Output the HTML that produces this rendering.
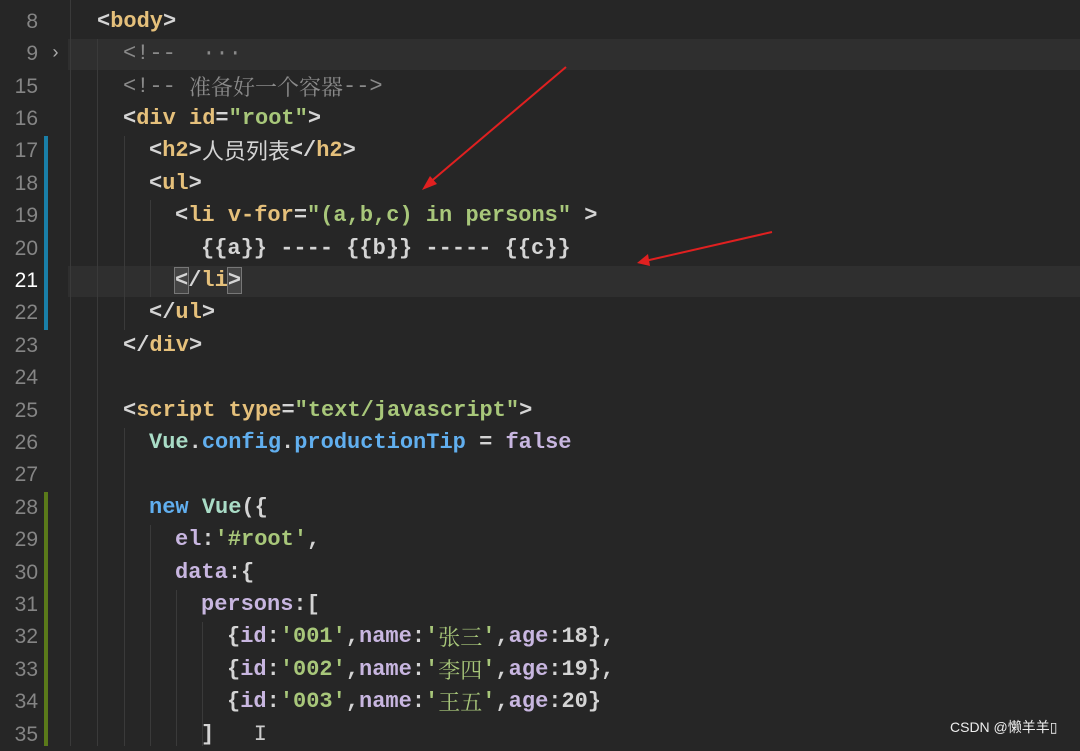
<!DOCTYPE html>
<html><head><meta charset="utf-8"><style>
body{margin:0;width:1080px;height:746px;background:#262626;overflow:hidden;position:relative;font-family:"Liberation Mono","Noto Sans CJK SC",monospace;font-size:22px;font-weight:bold;}
.ln{position:absolute;left:0;width:38px;text-align:right;color:#858585;font-weight:normal;font-family:"Liberation Sans",sans-serif;font-size:21px;height:32.4px;line-height:32.4px}
.c{position:absolute;white-space:pre;height:32.4px;line-height:32.4px;color:#d4d4d4}
.hl{position:absolute;left:68px;right:0;height:31px;background:#2f2f2f}
.t{color:#e5c07b}.s{color:#a8c77a}.g{color:#8a8a8a;font-weight:normal}.v{color:#a9dcc6}.b{color:#61afef}.p{color:#c8b6e0}
.cj{font-weight:normal;font-family:"Noto Sans CJK SC",sans-serif;line-height:1;display:inline-block;transform:translateY(3px)}
.cs{font-weight:normal;font-family:"Noto Serif CJK SC",serif;line-height:1;display:inline-block;transform:translateY(3px)}
.guide{position:absolute;width:1px;background:#3a3a3a}
</style></head><body>
<div class="hl" style="top:39px"></div>
<div class="hl" style="top:266px"></div>
<div style="position:absolute;left:44px;top:136px;width:4px;height:194px;background:#1a7fa8"></div>
<div style="position:absolute;left:44px;top:492px;width:4px;height:254px;background:#5a7a1a"></div>
<div class="guide" style="left:70px;top:0;height:746px"></div>
<div class="guide" style="left:97px;top:39px;height:707px"></div>
<div class="guide" style="left:124px;top:136px;height:194px"></div>
<div class="guide" style="left:124px;top:428px;height:318px"></div>
<div class="guide" style="left:150px;top:200px;height:97px"></div>
<div class="guide" style="left:150px;top:525px;height:221px"></div>
<div class="guide" style="left:176px;top:590px;height:156px"></div>
<div class="guide" style="left:202px;top:622px;height:124px"></div>
<div class="ln" style="top:5.8px">8</div><div class="c" style="left:97px;top:5.8px">&lt;<span class="t">body</span>&gt;</div>
<div class="ln" style="top:38.2px">9</div><div style="position:absolute;left:50px;top:38px;color:#aaa;font-size:18px;font-weight:normal;line-height:32px">›</div><div class="c g" style="left:123px;top:38.2px">&lt;!--  ···</div>
<div class="ln" style="top:70.6px">15</div><div class="c g" style="left:123px;top:70.6px">&lt;!-- <span class="cs">准备好一个容器</span>--&gt;</div>
<div class="ln" style="top:103px">16</div><div class="c" style="left:123px;top:103px">&lt;<span class="t">div</span> <span class="t">id</span>=<span class="s">"root"</span>&gt;</div>
<div class="ln" style="top:135.4px">17</div><div class="c" style="left:149px;top:135.4px">&lt;<span class="t">h2</span>&gt;<span class="cj">人员列表</span>&lt;/<span class="t">h2</span>&gt;</div>
<div class="ln" style="top:167.8px">18</div><div class="c" style="left:149px;top:167.8px">&lt;<span class="t">ul</span>&gt;</div>
<div class="ln" style="top:200.2px">19</div><div class="c" style="left:175px;top:200.2px">&lt;<span class="t">li</span> <span class="t">v-for</span>=<span class="s">"(a,b,c) in persons"</span> &gt;</div>
<div class="ln" style="top:232.6px">20</div><div class="c" style="left:201px;top:232.6px">{{a}} ---- {{b}} ----- {{c}}</div>
<div class="ln" style="top:265px;color:#fff">21</div><div class="c" style="left:175px;top:265px"><span style="outline:1px solid #777;background:#444">&lt;</span>/<span class="t">li</span><span style="outline:1px solid #777;background:#444">&gt;</span></div>
<div class="ln" style="top:297.4px">22</div><div class="c" style="left:149px;top:297.4px">&lt;/<span class="t">ul</span>&gt;</div>
<div class="ln" style="top:329.8px">23</div><div class="c" style="left:123px;top:329.8px">&lt;/<span class="t">div</span>&gt;</div>
<div class="ln" style="top:362.2px">24</div>
<div class="ln" style="top:394.6px">25</div><div class="c" style="left:123px;top:394.6px">&lt;<span class="t">script</span> <span class="t">type</span>=<span class="s">"text/javascript"</span>&gt;</div>
<div class="ln" style="top:427px">26</div><div class="c" style="left:149px;top:427px"><span class="v">Vue</span>.<span class="b">config</span>.<span class="b">productionTip</span> = <span class="p">false</span></div>
<div class="ln" style="top:459.4px">27</div>
<div class="ln" style="top:491.8px">28</div><div class="c" style="left:149px;top:491.8px"><span class="b">new</span> <span class="v">Vue</span>({</div>
<div class="ln" style="top:524.2px">29</div><div class="c" style="left:175px;top:524.2px"><span class="p">el</span>:<span class="s">'#root'</span>,</div>
<div class="ln" style="top:556.6px">30</div><div class="c" style="left:175px;top:556.6px"><span class="p">data</span>:{</div>
<div class="ln" style="top:589px">31</div><div class="c" style="left:201px;top:589px"><span class="p">persons</span>:[</div>
<div class="ln" style="top:621.4px">32</div><div class="c" style="left:227px;top:621.4px">{<span class="p">id</span>:<span class="s">'001'</span>,<span class="p">name</span>:<span class="s">'<span class="cs">张三</span>'</span>,<span class="p">age</span>:18},</div>
<div class="ln" style="top:653.8px">33</div><div class="c" style="left:227px;top:653.8px">{<span class="p">id</span>:<span class="s">'002'</span>,<span class="p">name</span>:<span class="s">'<span class="cs">李四</span>'</span>,<span class="p">age</span>:19},</div>
<div class="ln" style="top:686.2px">34</div><div class="c" style="left:227px;top:686.2px">{<span class="p">id</span>:<span class="s">'003'</span>,<span class="p">name</span>:<span class="s">'<span class="cs">王五</span>'</span>,<span class="p">age</span>:20}</div>
<div class="ln" style="top:718.6px">35</div><div class="c" style="left:201px;top:718.6px">] <span style="font-weight:normal;color:#ccc">  I</span></div>
<svg style="position:absolute;left:0;top:0" width="1080" height="746">
<line x1="566" y1="67" x2="428" y2="184" stroke="#e02020" stroke-width="2"/>
<polygon points="422,190 430,176 437,184" fill="#e02020"/>
<line x1="772" y1="232" x2="645" y2="261" stroke="#e02020" stroke-width="2"/>
<polygon points="637,263 648,254 650,266" fill="#e02020"/>
</svg>
<div style="position:absolute;left:950px;top:717px;color:#eee;font-family:'Liberation Sans','Noto Sans CJK SC',sans-serif;font-size:14px;font-weight:normal">CSDN @懒羊羊▯</div>
</body></html>
